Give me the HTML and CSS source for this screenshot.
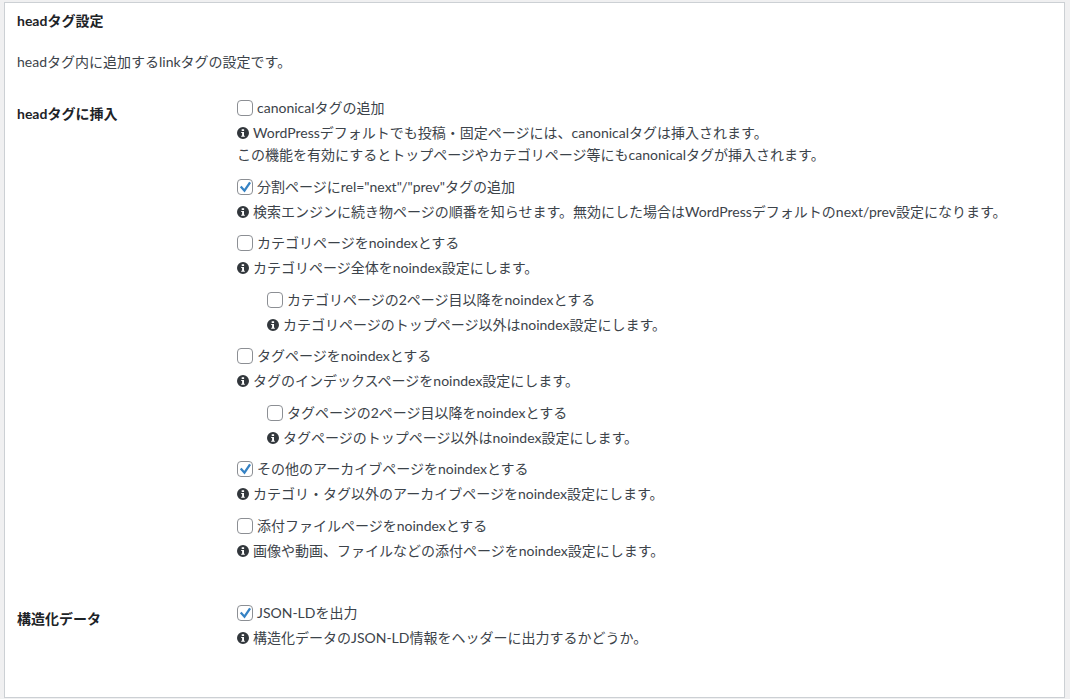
FILE: index.html
```html
<!DOCTYPE html>
<html lang="ja">
<head>
<meta charset="utf-8">
<title>headタグ設定</title>
<link rel="stylesheet" href="styles.css">
</head>
<body>
<svg class="sprite" width="0" height="0" aria-hidden="true"><symbol id="info" viewBox="0 0 12 12"><path fill-rule="evenodd" d="M6 0a6 6 0 1 1 0 12A6 6 0 0 1 6 0zM4.7 2.2v1.8h2.4V2.2zM4.2 5v1.1h.9v2.6h-.9v1.1h3.6V8.7h-.8V5z"/></symbol><symbol id="tick" viewBox="0 0 16 16"><path d="M3.1 7.4l4.3 4.8 6.4-9.6"/></symbol></svg>
<main class="panel">
  <h2 class="title">headタグ設定</h2>
  <p class="lead">headタグ内に追加するlinkタグの設定です。</p>
  <section class="row first">
    <h3 class="row-label">headタグに挿入</h3>
    <div class="row-body">
      <div class="opt">
        <label class="check"><span class="box"></span>canonicalタグの追加</label>
        <p class="desc"><svg class="i"><use href="#info"/></svg>WordPressデフォルトでも投稿・固定ページには、canonicalタグは挿入されます。<br>この機能を有効にするとトップページやカテゴリページ等にもcanonicalタグが挿入されます。</p>
      </div>
      <div class="opt">
        <label class="check"><span class="box"><svg class="tick"><use href="#tick"/></svg></span>分割ページにrel="next"/"prev"タグの追加</label>
        <p class="desc"><svg class="i"><use href="#info"/></svg>検索エンジンに続き物ページの順番を知らせます。無効にした場合はWordPressデフォルトのnext/prev設定になります。</p>
      </div>
      <div class="opt">
        <label class="check"><span class="box"></span>カテゴリページをnoindexとする</label>
        <p class="desc"><svg class="i"><use href="#info"/></svg>カテゴリページ全体をnoindex設定にします。</p>
      </div>
      <div class="opt sub">
        <label class="check"><span class="box"></span>カテゴリページの2ページ目以降をnoindexとする</label>
        <p class="desc"><svg class="i"><use href="#info"/></svg>カテゴリページのトップページ以外はnoindex設定にします。</p>
      </div>
      <div class="opt">
        <label class="check"><span class="box"></span>タグページをnoindexとする</label>
        <p class="desc"><svg class="i"><use href="#info"/></svg>タグのインデックスページをnoindex設定にします。</p>
      </div>
      <div class="opt sub">
        <label class="check"><span class="box"></span>タグページの2ページ目以降をnoindexとする</label>
        <p class="desc"><svg class="i"><use href="#info"/></svg>タグページのトップページ以外はnoindex設定にします。</p>
      </div>
      <div class="opt">
        <label class="check"><span class="box"><svg class="tick"><use href="#tick"/></svg></span>その他のアーカイブページをnoindexとする</label>
        <p class="desc"><svg class="i"><use href="#info"/></svg>カテゴリ・タグ以外のアーカイブページをnoindex設定にします。</p>
      </div>
      <div class="opt">
        <label class="check"><span class="box"></span>添付ファイルページをnoindexとする</label>
        <p class="desc"><svg class="i"><use href="#info"/></svg>画像や動画、ファイルなどの添付ページをnoindex設定にします。</p>
      </div>
    </div>
  </section>
  <section class="row">
    <h3 class="row-label">構造化データ</h3>
    <div class="row-body">
      <div class="opt">
        <label class="check"><span class="box"><svg class="tick"><use href="#tick"/></svg></span>JSON-LDを出力</label>
        <p class="desc"><svg class="i"><use href="#info"/></svg>構造化データのJSON-LD情報をヘッダーに出力するかどうか。</p>
      </div>
    </div>
  </section>
</main>
</body>
</html>
```

FILE: styles.css
```css
* { box-sizing: border-box; }
html, body { height: 100%; }
body {
  margin: 0;
  padding: 2px 5px 1px 4px;
  background: #f0f0f1;
  color: #3c434a;
  font: 14px/22px "Lato", "Noto Sans CJK JP", sans-serif;
  overflow: hidden;
}
.sprite { position: absolute; }
.panel {
  height: 696px;
  background: #fff;
  border: 1px solid #ccd0d4;
  padding: 8px 12px 0;
}
.title, .row-label {
  margin: 0;
  font-size: 14px;
  font-weight: 700;
  color: #1d2327;
}
.title { line-height: 20px; }
.lead { margin: 20px 0 0; line-height: 22px; }
.row { display: flex; margin-top: 30.5px; }
.row.first { margin-top: 24.2px; }
.row-label { width: 220px; padding-top: 6px; line-height: 22px; flex: none; }
.row-body { flex: 1; min-width: 0; }
.opt { margin-bottom: 9.5px; }
.sub { margin-left: 30px; }
.check { display: flex; align-items: center; height: 25px; padding-bottom: 3px; }
.box {
  width: 16px;
  height: 16px;
  margin-right: 4px;
  border: 1px solid #8c8f94;
  border-radius: 4px;
  background: #fff;
  flex: none;
}
.tick { display: block; width: 14px; height: 14px; fill: none; stroke: #3582c4; stroke-width: 2.6; }
.desc { margin: 0; }
.i { width: 12px; height: 12px; margin-right: 4px; vertical-align: -1px; fill: #32373c; }
```
